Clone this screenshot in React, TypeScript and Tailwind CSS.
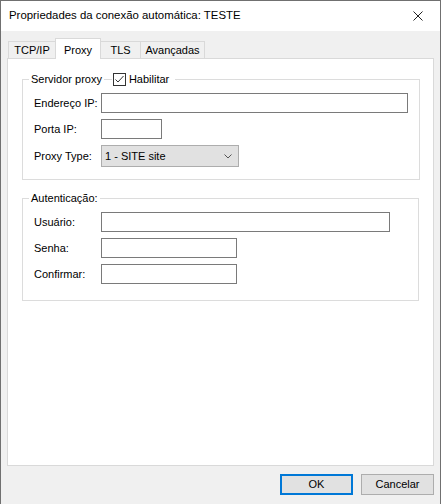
import { useState } from 'react'

const inputClass = 'h-[20px] border border-[#7a7a7a] bg-white px-1 text-[11px] outline-none'

function Field({ label, children }: { label: string; children: React.ReactNode }) {
  return (
    <div className="flex items-center">
      <label className="w-[67px] shrink-0 leading-[13px]">{label}</label>
      {children}
    </div>
  )
}

function Tab({ label, active, className }: { label: string; active?: boolean; className: string }) {
  return (
    <div
      className={
        active
          ? `relative z-10 -mb-px flex h-[21px] items-start justify-center border border-b-0 border-[#d9d9d9] bg-white pt-[3px] ${className}`
          : `flex h-[17px] items-center justify-center border-t border-[#d9d9d9] bg-[#f0f0f0] ${className}`
      }
    >
      {label}
    </div>
  )
}

export default function App() {
  const [enabled, setEnabled] = useState(true)
  const [proxyType, setProxyType] = useState('1 - SITE site')

  return (
    <div className="flex h-[504px] w-[441px] flex-col border border-b-0 border-[#707070] bg-[#f0f0f0] font-['Liberation_Sans',Arial,sans-serif] text-[11px] text-black">
      {/* Title bar */}
      <div className="flex h-[30px] shrink-0 items-center justify-between bg-white pl-2 pr-[17px]">
        <span className="text-[11.4px]">Propriedades da conexão automática: TESTE</span>
        <svg width="10" height="10" viewBox="0 0 10 10" className="text-[#222]">
          <path d="M0.5 0.5 L9.5 9.5 M9.5 0.5 L0.5 9.5" stroke="currentColor" strokeWidth="1" fill="none" />
        </svg>
      </div>

      <div className="flex flex-1 flex-col px-[6px] pt-[7px]">
        {/* Tabs */}
        <div className="flex h-[20px] items-end pl-px">
          <Tab label="TCP/IP" className="w-[47px] border-l" />
          <Tab label="Proxy" active className="w-[46px]" />
          <Tab label="TLS" className="w-[39px]" />
          <Tab label="Avançadas" className="w-[65px] border-x" />
        </div>

        {/* Tab panel */}
        <div className="flex h-[408px] shrink-0 flex-col border border-[#d9d9d9] bg-white px-[14px] pt-[13px]">
          <fieldset className="border border-[#dcdcdc] pb-[12px] pl-[6px] pr-[11px]">
            <legend className="flex h-[14px] items-center">
              <span className="px-[2px] leading-[13px]">Servidor proxy</span>
              <span className="h-px w-[8px] bg-[#dcdcdc]" />
              <label className="flex items-center gap-[3px] pl-px pr-[6px]">
                <button
                  type="button"
                  onClick={() => setEnabled(!enabled)}
                  className="flex h-[13px] w-[13px] items-center justify-center border border-[#333] bg-white"
                >
                  {enabled && (
                    <svg width="11" height="11" viewBox="0 0 11 11">
                      <path d="M1.5 5.5 L4 8 L9.5 2" stroke="#333" strokeWidth="1" fill="none" />
                    </svg>
                  )}
                </button>
                <span className="leading-[13px]">Habilitar</span>
              </label>
            </legend>

            <div className="mt-[7px] flex flex-col gap-[6px] pl-[5px]">
              <Field label="Endereço IP:">
                <input className={`${inputClass} w-[307px]`} />
              </Field>
              <Field label="Porta IP:">
                <input className={`${inputClass} w-[61px]`} />
              </Field>
              <Field label="Proxy Type:">
                <button
                  type="button"
                  onClick={() => setProxyType(proxyType)}
                  className="flex h-[22px] w-[138px] items-center justify-between border border-[#adadad] bg-[#e1e1e1] pl-[3px] pr-[6px]"
                >
                  <span>{proxyType}</span>
                  <svg width="8" height="5" viewBox="0 0 8 5">
                    <path d="M0.5 0.5 L4 4 L7.5 0.5" stroke="#555" strokeWidth="1" fill="none" />
                  </svg>
                </button>
              </Field>
            </div>
          </fieldset>

          <fieldset className="mt-[12px] border border-[#dcdcdc] pb-[16px] pl-[6px] pr-[11px]">
            <legend className="px-[2px] leading-[13px]">Autenticação:</legend>
            <div className="mt-[7px] flex flex-col gap-[6px] pl-[5px]">
              <Field label="Usuário:">
                <input className={`${inputClass} w-[289px]`} />
              </Field>
              <Field label="Senha:">
                <input type="password" className={`${inputClass} w-[136px]`} />
              </Field>
              <Field label="Confirmar:">
                <input type="password" className={`${inputClass} w-[136px]`} />
              </Field>
            </div>
          </fieldset>
        </div>

        {/* Dialog buttons */}
        <div className="mt-[8px] flex justify-end gap-[8px]">
          <button className="h-[21px] w-[73px] border-2 border-[#0078d7] bg-[#e1e1e1]">OK</button>
          <button className="h-[21px] w-[73px] border border-[#adadad] bg-[#e1e1e1]">Cancelar</button>
        </div>
      </div>
    </div>
  )
}
